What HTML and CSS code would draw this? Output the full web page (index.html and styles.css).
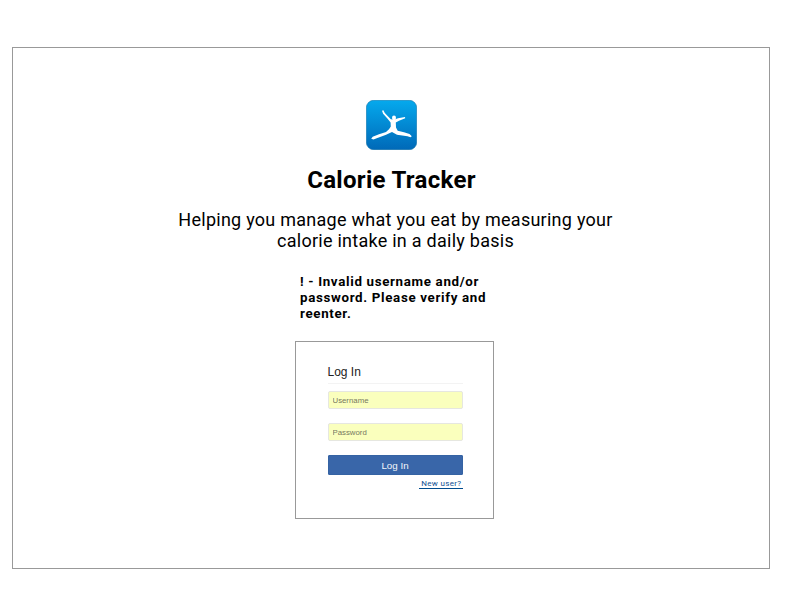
FILE: index.html
```html
<!DOCTYPE html>
<html lang="en">
<head>
<meta charset="utf-8">
<title>Calorie Tracker</title>
<link rel="stylesheet" href="styles.css">
</head>
<body>
<main class="frame">
  <svg class="logo" viewBox="0 0 51 50" aria-hidden="true">
    <defs><linearGradient id="sky" x1="0" y1="0" x2="0" y2="1"><stop offset="0" stop-color="#05a9ed"/><stop offset="1" stop-color="#0069b8"/></linearGradient></defs>
    <rect x=".3" y=".3" width="50.4" height="49.4" rx="7.5" fill="url(#sky)" stroke="#1673a8" stroke-width=".6"/>
    <g fill="#fff">
      <ellipse cx="28" cy="18" rx="2" ry="2.4"/>
      <path d="M16 10.8 L17.4 10.3 L18.8 13 L24.8 19.2 L28 19.8 L32 18.2 L39 17 L39.2 18.3 L33 20.8 L29.8 22.4 L30 27.5 L31.7 30.8 L38 32.2 L43.5 34.1 L45.8 36.2 L44.5 37.2 L41.5 36.2 L31 34.8 L26 32 L19.5 34.9 L12 37.8 L7.5 39.5 L5.2 38.7 L6.7 36.8 L13 34.2 L20 32 L23 29.2 L24.8 26.4 L24.6 22.4 L21.6 18.7 L17.1 13.8 Z"/>
    </g>
  </svg>
  <h1 class="title">Calorie Tracker</h1>
  <p class="tagline">Helping you manage what you eat by measuring your<br>calorie intake in a daily basis</p>
  <p class="error">! - Invalid username and/or<br>password. Please verify and<br>reenter.</p>
  <form class="login">
    <h2 class="login-title">Log In</h2>
    <input class="field" type="text" placeholder="Username" aria-label="Username">
    <input class="field" type="password" placeholder="Password" aria-label="Password">
    <button class="submit" type="button">Log In</button>
    <a class="signup" href="#">New user?</a>
  </form>
</main>
</body>
</html>
```

FILE: styles.css
```css
* { box-sizing: border-box; }
body { margin: 0; background: #fff; color: #000; font-family: Roboto, sans-serif; }
h1, h2, p { margin: 0; }
.frame {
  width: 758px;
  height: 522px;
  margin: 47px 0 0 12px;
  padding: 52px 0 0 9px;
  border: 1px solid #999;
  display: flex;
  flex-direction: column;
  align-items: center;
}
.logo { width: 51px; height: 50px; margin-right: 8px; flex: none; }
.title { margin: 16px 8px 0 0; font-size: 24px; line-height: 28px; font-weight: 700; letter-spacing: .3px; white-space: nowrap; }
.tagline { margin-top: 15px; font-size: 18px; line-height: 21px; letter-spacing: .26px; text-align: center; white-space: nowrap; }
.error { width: 191px; margin-top: 23px; font-size: 13.33px; line-height: 16px; font-weight: 700; letter-spacing: .67px; white-space: nowrap; }
.login {
  width: 199px;
  height: 178px;
  margin: 19px 2px 0 0;
  padding: 20px 30px 0 31.5px;
  border: 1px solid #999;
  display: flex;
  flex-direction: column;
  font-family: "Liberation Sans", sans-serif;
}
.login-title { width: 135px; height: 22px; border-bottom: 1px solid #f3f3f3; color: #222; font-size: 12px; font-weight: 400; line-height: 20px; }
.field {
  width: 135px;
  height: 18px;
  margin: 7px 0 0;
  padding: 0 4px;
  border: 1px solid #e6e7e0;
  border-radius: 2px;
  background: #faffbd;
  font: 7.8px "Liberation Sans", sans-serif;
}
.field + .field { margin-top: 14px; }
.field::placeholder { color: #77795f; opacity: 1; }
.submit {
  width: 135px;
  height: 20px;
  margin-top: 14px;
  padding: 0;
  border: 1px solid #3563a3;
  border-radius: 1px;
  background: #3966a9;
  color: #f3f6fb;
  font: 9.8px "Liberation Sans", sans-serif;
}
.signup {
  align-self: flex-end;
  height: 13px;
  margin: 1px .5px 0 0;
  padding: 0 1px 0 2px;
  border-bottom: 1px solid #004b8d;
  color: #0e4f92;
  font: 8px/15px Roboto, sans-serif;
  letter-spacing: .35px;
  text-decoration: none;
}
```
